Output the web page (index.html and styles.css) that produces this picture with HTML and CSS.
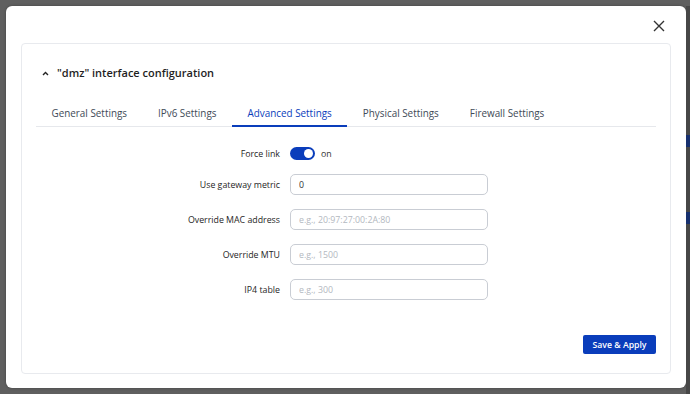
FILE: index.html
```html
<!DOCTYPE html>
<html lang="en">
<head>
<meta charset="UTF-8">
<title>Interface configuration</title>
<link rel="stylesheet" href="styles.css">
</head>
<body>
<div class="backdrop">
    <div class="modal">
        <div class="modal-top">
            <button class="close" aria-label="Close">
                <svg width="12" height="12" viewBox="0 0 12 12"><path d="M1 1L11 11M11 1L1 11" stroke="#333" stroke-width="1.4" fill="none"/></svg>
            </button>
        </div>
        <div class="card">
            <h3 class="card-title">
                <svg width="7" height="5" viewBox="0 0 7 5"><path d="M1 4L3.5 1.5L6 4" stroke="#222" stroke-width="1.4" fill="none"/></svg>
                "dmz" interface configuration
            </h3>
            <ul class="tabs">
                <li>General Settings</li>
                <li>IPv6 Settings</li>
                <li class="active">Advanced Settings</li>
                <li>Physical Settings</li>
                <li>Firewall Settings</li>
            </ul>
            <form class="form">
                <div class="row toggle-row">
                    <label>Force link</label>
                    <div class="toggle-wrap">
                        <span class="toggle"><span class="knob"></span></span>
                        <span class="toggle-text">on</span>
                    </div>
                </div>
                <div class="row">
                    <label>Use gateway metric</label>
                    <input type="text" value="0">
                </div>
                <div class="row">
                    <label>Override MAC address</label>
                    <input type="text" placeholder="e.g., 20:97:27:00:2A:80">
                </div>
                <div class="row">
                    <label>Override MTU</label>
                    <input type="text" placeholder="e.g., 1500">
                </div>
                <div class="row">
                    <label>IP4 table</label>
                    <input type="text" placeholder="e.g., 300">
                </div>
            </form>
            <div class="actions">
                <button class="btn-primary">Save &amp; Apply</button>
            </div>
        </div>
    </div>
    <div class="peek">
        <span class="peek-mark one"></span>
        <span class="peek-mark two"></span>
    </div>
</div>
</body>
</html>
```

FILE: styles.css
```css
body {
    margin: 0;
    font-family: "Open Sans", "Noto Sans", sans-serif;
    background-color: #5f5f5f;
    color: #2b2b2b;
}
.backdrop {
    height: 394px;
    display: flex;
    padding: 6px 0 0 6px;
    box-sizing: border-box;
}
.modal {
    width: 680px;
    height: 382px;
    background-color: #fff;
    border-radius: 6px;
    box-shadow: 0 0 3px rgba(0,0,0,0.3);
    padding: 0 15px;
    box-sizing: border-box;
    display: flex;
    flex-direction: column;
}
.modal-top {
    height: 37px;
    display: flex;
    justify-content: flex-end;
    align-items: center;
    padding-top: 3px;
    box-sizing: border-box;
}
.close {
    border: none;
    background: none;
    padding: 0;
    margin-right: 6px;
    width: 12px;
    height: 12px;
    display: flex;
}
.card {
    height: 331px;
    border: 1px solid #e8eaee;
    border-radius: 4px;
    padding: 0 14px;
    box-sizing: border-box;
    display: flex;
    flex-direction: column;
}
.card-title {
    margin: 21px 0 0 6px;
    font-size: 11px;
    line-height: 16px;
    font-weight: 600;
    color: #1f1f1f;
    display: flex;
    align-items: center;
    gap: 8px;
}
.tabs {
    list-style: none;
    margin: 20px 0 0 0;
    padding: 0;
    display: flex;
    border-bottom: 1px solid #e6e8ec;
}
.tabs li {
    font-size: 9.9px;
    line-height: 14px;
    color: #414a57;
    padding: 5px 15.5px;
    border-bottom: 2px solid transparent;
    margin-bottom: -1px;
}
.tabs li.active {
    color: #0a3dbb;
    border-bottom-color: #0a3dbb;
}
.form {
    margin-top: 20px;
    display: flex;
    flex-direction: column;
    gap: 14px;
}
.row {
    display: flex;
    align-items: center;
    height: 21px;
}
.row.toggle-row {
    height: 13px;
}
.row label {
    width: 254px;
    text-align: right;
    font-size: 8.8px;
    color: #262626;
    padding-right: 10px;
    box-sizing: border-box;
}
.row input {
    width: 198px;
    height: 21px;
    border: 1px solid #c9cdd4;
    border-radius: 5px;
    padding: 0 8px;
    box-sizing: border-box;
    font-family: inherit;
    font-size: 8.8px;
    color: #333;
}
.row input::placeholder {
    color: #b3b8c0;
}
.toggle-wrap {
    display: flex;
    align-items: center;
    gap: 6px;
}
.toggle {
    width: 25px;
    height: 13px;
    border-radius: 7px;
    background-color: #0a3dbb;
    display: flex;
    align-items: center;
    justify-content: flex-end;
    padding: 0 2px;
    box-sizing: border-box;
}
.knob {
    width: 9px;
    height: 9px;
    border-radius: 50%;
    background-color: #fff;
}
.toggle-text {
    font-size: 8.8px;
    color: #333;
}
.actions {
    margin-top: auto;
    margin-bottom: 19px;
    display: flex;
    justify-content: flex-end;
}
.btn-primary {
    background-color: #0a3dbb;
    color: #fff;
    border: none;
    border-radius: 2px;
    font-family: inherit;
    font-size: 8.7px;
    font-weight: 600;
    width: 73px;
    height: 19px;
    padding: 0;
}
.peek {
    width: 4px;
    background-color: #474747;
    height: 388px;
    position: relative;
}
.peek-mark {
    position: absolute;
    left: 0;
    width: 4px;
    height: 12px;
    background-color: #17306e;
}
.peek-mark.one { top: 129px; }
.peek-mark.two { top: 206px; }
```
